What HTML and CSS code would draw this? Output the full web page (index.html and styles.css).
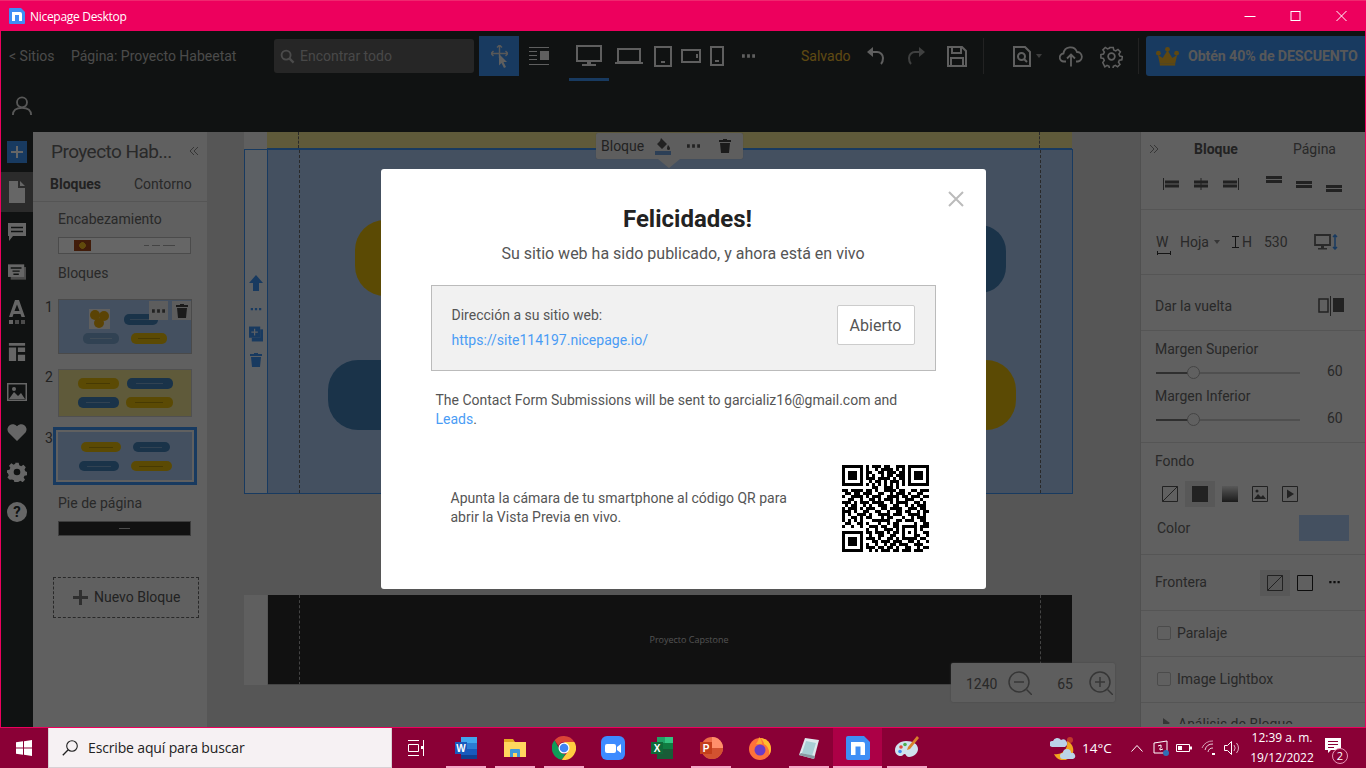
FILE: index.html
```html
<!DOCTYPE html>
<html lang="es">
<head>
<meta charset="utf-8">
<title>Nicepage Desktop</title>
<link rel="stylesheet" href="styles.css">
</head>
<body>
<div class="screen">
  <header class="titlebar">
    <svg class="app-logo" viewBox="0 0 16 16"><path fill="#3f8ef5" d="M1 0h11l4 4v11a1 1 0 0 1-1 1H1a1 1 0 0 1-1-1V1a1 1 0 0 1 1-1z"/><path fill="#fff" d="M3 4h8a2 2 0 0 1 2 2v7h-3V7H6v6H3z"/></svg>
    <span class="app-name">Nicepage Desktop</span>
    <div class="win-controls">
      <svg class="win-btn" viewBox="0 0 45 30"><path stroke="#fff" d="M17 15.5h11"/></svg>
      <svg class="win-btn" viewBox="0 0 45 30"><rect x="17.5" y="10.5" width="9" height="9" fill="none" stroke="#fff"/></svg>
      <svg class="win-btn" viewBox="0 0 45 30"><path stroke="#fff" d="M17 10l10 10M27 10L17 20"/></svg>
    </div>
  </header>

  <div class="app">
    <section class="toolbar">
      <div class="tool-row">
        <span class="crumb">&lt; Sitios</span>
        <span class="page-name">Página: Proyecto Habeetat</span>
        <div class="search">
          <svg class="i16" viewBox="0 0 16 16"><circle cx="6.5" cy="6.5" r="4.8" fill="none" stroke="#bbb" stroke-width="2"/><path d="M10 10l4.5 4.5" stroke="#bbb" stroke-width="2.4"/></svg>
          <span>Encontrar todo</span>
        </div>
        <div class="tool move"><svg class="i24" viewBox="0 0 17 23"><path fill="none" stroke="#ddd" stroke-width="1.4" d="M8.500 0v13M0 8.500h17M2.500 6L0 8.500 2.500 11M14.500 6L17 8.500 14.500 11M6 2.500L8.500 0 11 2.500"/><path fill="#eee" d="M8 9l8 8h-3.500l2.500 5-2 1-2.500-5L8 20.500z"/></svg></div>
        <div class="tool w40"><svg class="i20" viewBox="0 0 20 20"><path stroke="#eee" d="M0 1.5h20M0 5.500h8M0 9.500h8M0 13.500h8M0 18.500h20"/><rect x="11" y="5" width="9" height="9" fill="#eee"/></svg></div>
        <div class="device active"><svg class="d-desk" viewBox="0 0 26 22"><path fill="none" stroke="#eee" stroke-width="2" d="M1 1h24v15H1z"/><path fill="#eee" d="M11 16h4v3h-4zM6 19h14v2H6z"/></svg></div>
        <div class="device w40d"><svg class="d-lap" viewBox="0 0 28 18"><path fill="none" stroke="#eee" stroke-width="2" d="M3 2h22v13H3z"/><path fill="#eee" d="M0 15h28v2H0z"/></svg></div>
        <div class="device w28"><svg class="d-tab" viewBox="0 0 18 21"><path fill="none" stroke="#eee" stroke-width="2" d="M1 1h16v19H1z"/><path fill="#eee" d="M7 15h4v2H7z"/></svg></div>
        <div class="device w28"><svg class="d-land" viewBox="0 0 20 14"><path fill="none" stroke="#eee" stroke-width="2" d="M1 1h18v12H1z"/><path fill="#eee" d="M15 5h2v4h-2z"/></svg></div>
        <div class="device w24"><svg class="d-ph" viewBox="0 0 14 20"><path fill="none" stroke="#eee" stroke-width="2" d="M1 1h12v18H1z"/><path fill="#eee" d="M5 14h4v2H5z"/></svg></div>
        <div class="device w38"><svg class="dots" viewBox="0 0 14 4"><path fill="#eee" d="M0 0h3v4H0zM5.500 0h3v4h-3zM11 0h3v4h-3z"/></svg></div>
        <span class="saved">Salvado</span>
        <div class="tool w38"><svg class="i20" viewBox="0 0 20 20"><path fill="none" stroke="#eee" stroke-width="2" d="M3 6h8a6 6 0 0 1 6 6c0 3-1 5-2 6"/><path fill="#eee" d="M7 1v10L1 6z"/></svg></div>
        <div class="tool w42"><svg class="i20 faint" viewBox="0 0 20 20"><path fill="none" stroke="#eee" stroke-width="2" d="M17 6H9a6 6 0 0 0-6 6c0 3 1 5 2 6"/><path fill="#eee" d="M13 1v10l6-5z"/></svg></div>
        <div class="tool w40"><svg class="i20 big" viewBox="0 0 20 21"><path fill="none" stroke="#eee" stroke-width="2" d="M1 1h14l4 4v15H1z"/><path fill="none" stroke="#eee" stroke-width="2" d="M5 1v6h9V1M4 20v-8h12v8"/></svg></div>
        <i class="vsep first"></i>
        <div class="tool doc"><svg class="d-doc" viewBox="0 0 18 21"><path fill="none" stroke="#eee" stroke-width="2" d="M1 1h11l5 5v14H1z"/><circle cx="8.500" cy="10.500" r="3.500" fill="none" stroke="#eee" stroke-width="2"/><path stroke="#eee" stroke-width="2" d="M11 13l3 3"/></svg><i class="caret"></i></div>
        <div class="tool w50"><svg class="d-cloud" viewBox="0 0 24 20"><path fill="none" stroke="#eee" stroke-width="1.800" d="M7 15H5a4 4 0 0 1-.5-8A7 7 0 0 1 18 5.500 4.800 4.800 0 0 1 19 15h-2"/><path fill="none" stroke="#eee" stroke-width="1.800" d="M12 20V9M8 12l4-4 4 4"/></svg></div>
        <div class="tool w30"><svg class="d-gear" viewBox="0 0 24 24"><circle cx="12" cy="12" r="3.500" fill="none" stroke="#eee" stroke-width="1.800"/><path fill="none" stroke="#eee" stroke-width="1.800" d="M10 1.500h4l.6 3 2.300 1 2.600-1.700 2.800 2.800-1.700 2.600 1 2.300 3 .6-.6 3.800-2.900.5-1 2.300 1.700 2.500-2.800 2.800-2.500-1.700-2.300 1-.6 2.900h-4l-.5-2.900-2.300-1-2.500 1.700L1.900 19l1.700-2.500-1-2.300-2.900-.5v-4l3-.6 1-2.300L2 4.300l2.800-2.800 2.600 1.700 2.300-1z" transform="translate(1.200 1.200) scale(.9)"/></svg></div>
        <i class="vsep second"></i>
        <div class="deal">
          <svg class="crown" viewBox="0 0 24 20"><path fill="#f0b429" d="M4 18l-2-9 5 3 5-8 5 8 5-3-2 9z"/><circle cx="12" cy="3" r="2.500" fill="#f0b429"/><circle cx="2.500" cy="7" r="2.500" fill="#f0b429"/><circle cx="21.500" cy="7" r="2.500" fill="#f0b429"/><rect x="4" y="18" width="16" height="2" fill="#f0b429"/></svg>
          <span>Obtén 40% de DESCUENTO</span>
        </div>
      </div>
      <div class="user-row">
        <svg class="user" viewBox="0 0 22 22"><circle cx="11" cy="7" r="5.500" fill="none" stroke="#ddd" stroke-width="2"/><path fill="none" stroke="#ddd" stroke-width="2" d="M1 21c0-6 4-8 10-8s10 2 10 8"/></svg>
      </div>
    </section>

    <div class="workspace">
      <nav class="rail">
        <div class="rail-item"><span class="plus-box"><svg class="i14" viewBox="0 0 14 14"><path fill="#fff" d="M6 1h2v5h5v2H8v5H6V8H1V6h5z"/></svg></span></div>
        <div class="rail-item on"><svg class="r-doc" viewBox="0 0 16 22"><path fill="#fff" d="M0 0h9v7h7v15H0zM11 0l5 5h-5z"/></svg></div>
        <div class="rail-item"><svg class="r-20" viewBox="0 0 18 18"><path fill="#fff" d="M0 0h18v13H5l-4 5v-5H0z"/><path stroke="#2a2f2d" stroke-width="1.500" d="M3 4.500h12M3 8.500h12"/></svg></div>
        <div class="rail-item"><svg class="r-20" viewBox="0 0 20 17"><path fill="#bbb" d="M3 3h17v14H3z"/><path fill="#fff" d="M0 0h18v14H0z"/><path stroke="#2a2f2d" stroke-width="1.500" d="M3 4h12M5 7.500h8M6 11h6"/></svg></div>
        <div class="rail-item"><svg class="r-a" viewBox="0 0 16 24"><path fill="#fff" d="M6 0h4l6 17h-3.500l-1-3H4.500l-1 3H0zM8 4.500L5.500 11h5z"/><path fill="#fff" d="M0 20h4v4H0z"/><path fill="#bbb" d="M6 20h4v4H6zM12 20h4v4h-4z"/></svg></div>
        <div class="rail-item"><svg class="r-20" viewBox="0 0 18 20"><path fill="#fff" d="M0 0h18v3H0zM0 5h8v15H0zM10 5h8v5h-8zM10 13h8v7h-8z"/></svg></div>
        <div class="rail-item"><svg class="r-20w" viewBox="0 0 20 18"><path fill="#fff" d="M0 0h20v18H0z"/><path fill="#2a2f2d" d="M1.500 1.500h17v15h-17z"/><path fill="#fff" d="M2 16l5-7 4 4 3-3 4 6z"/><circle cx="7" cy="6" r="2" fill="#fff"/></svg></div>
        <div class="rail-item"><svg class="r-20w" viewBox="0 0 20 18"><path fill="#fff" d="M10 18L1.500 9.500A5.200 5.200 0 0 1 10 3.300a5.200 5.200 0 0 1 8.500 6.200z"/></svg></div>
        <div class="rail-item"><svg class="r-20w" viewBox="0 0 24 24"><path fill="#fff" fill-rule="evenodd" d="M10 1h4l.7 3 2.300 1 2.700-1.600 2.800 2.800L21 8.900l1 2.300 2 .8v4l-3 .4-1 2.300 1.600 2.700-2.800 2.800-2.700-1.600-2.300 1-.8 1.400h-4l-.7-3-2.300-1L3.300 21.400.5 18.600 2.100 15.900 1 13.600l-1-.6v-3l3-.7 1-2.300L2.400 4.400 5.200 1.600 7.900 3.200 10 2.200zM12 8a4 4 0 1 0 0 8 4 4 0 0 0 0-8z"/></svg></div>
        <div class="rail-item"><span class="help">?</span></div>
      </nav>

      <aside class="blocks">
        <div class="panel-title"><span>Proyecto Hab...</span><svg class="chev" viewBox="0 0 10 10"><path fill="none" stroke="#888" d="M5 1L1 5l4 4M9 1L5 5l4 4"/></svg></div>
        <div class="tabs"><b>Bloques</b><span>Contorno</span></div>
        <div class="blk-label first">Encabezamiento</div>
        <div class="thumb-head"><i class="sun"></i><i class="dash d1"></i><i class="dash d2"></i><i class="dash d3"></i></div>
        <div class="blk-label">Bloques</div>
        <div class="thumb-row r1">
          <span class="num">1</span>
          <div class="thumb blue">
            <div class="t-line"><span class="honey"><i></i><i></i><i></i></span><i class="pill pb w34"></i></div>
            <div class="t-line tight"><i class="pill pl w36"></i><i class="pill py w36"></i></div>
            <span class="tb-act a1"><svg class="dots small" viewBox="0 0 14 4"><path fill="#555" d="M0 0h3v4H0zM5.500 0h3v4h-3zM11 0h3v4h-3z"/></svg></span>
            <span class="tb-act a2"><svg class="can" viewBox="0 0 12 14"><path fill="#444" d="M4 0h4v1h4v2H0V1h4zM1 4h10l-1 10H2z"/></svg></span>
          </div>
        </div>
        <div class="thumb-row r2">
          <span class="num">2</span>
          <div class="thumb yellow">
            <div class="t-line l2"><i class="pill py w41"></i><i class="pill pb w46"></i></div>
            <div class="t-line l2b"><i class="pill pb w41"></i><i class="pill py w47"></i></div>
          </div>
        </div>
        <div class="thumb-row r3">
          <span class="num n3">3</span>
          <div class="thumb-sel">
            <div class="thumb blue in3">
              <div class="t-line"><i class="pill py w40 s"></i><i class="pill pb w37 s"></i></div>
              <div class="t-line l3b"><i class="pill pb w40 s"></i><i class="pill py w41 s"></i></div>
            </div>
          </div>
        </div>
        <div class="blk-label foot">Pie de página</div>
        <div class="thumb-foot"><i></i></div>
        <div class="new-block"><svg class="i16b" viewBox="0 0 15 15"><path fill="#777" d="M6 0h3v6h6v3H9v6H6V9H0V6h6z"/></svg><span>Nuevo Bloque</span></div>
      </aside>

      <main class="canvas">
        <div class="page-row top-row"><div class="strip"></div><div class="sec-yellow"><i class="guide g1"></i><i class="guide g2"></i></div></div>
        <div class="page-row block-row">
          <div class="strip side">
            <svg class="side-i" viewBox="0 0 14 16"><path fill="#3c91f0" d="M7 0l7 8H10v8H4V8H0z"/></svg>
            <svg class="side-d" viewBox="0 0 14 4"><path fill="#3c91f0" d="M0 0h3v3H0zM5.500 0h3v3h-3zM11 0h3v3h-3z"/></svg>
            <svg class="side-i" viewBox="0 0 15 16"><path fill="#3c91f0" d="M3 3h12v13H3z"/><path fill="#e6f0fa" d="M1 1h11v11H1z"/><path fill="#3c91f0" d="M0 0h12v12H0z"/><path stroke="#e6f0fa" stroke-width="1.300" d="M6 2.500v7M2.500 6h7"/></svg>
            <svg class="side-c" viewBox="0 0 12 14"><path fill="#3c91f0" d="M4 0h4v1h4v2H0V1h4zM1 4h10l-1 10H2z"/></svg>
          </div>
          <div class="sec-block">
            <i class="guide g1"></i><i class="guide g2"></i>
            <i class="big-pill yl"></i><i class="big-pill br"></i><i class="big-pill bl"></i><i class="big-pill yr"></i>
          </div>
        </div>
        <div class="page-row foot-row">
          <div class="strip"></div>
          <div class="sec-foot"><i class="guide g1"></i><i class="guide g2"></i><span>Proyecto Capstone</span></div>
        </div>
        <div class="block-bar">
          <span>Bloque</span>
          <svg class="bb-fill" viewBox="0 0 16 17"><path fill="#555" d="M6 0l6 6-5 5-5-5 3-3z"/><path fill="#555" d="M13 7s2 2 2 3.500a1.500 1.500 0 0 1-3 0C12 9 13 7 13 7z"/><path fill="#6f9fd6" d="M0 13h16v4H0z"/></svg>
          <svg class="dots small" viewBox="0 0 14 4"><path fill="#555" d="M0 0h3v4H0zM5.500 0h3v4h-3zM11 0h3v4h-3z"/></svg>
          <svg class="can" viewBox="0 0 12 14"><path fill="#444" d="M4 0h4v1h4v2H0V1h4zM1 4h10l-1 10H2z"/></svg>
        </div>
        <div class="zoombar">
          <span class="z1">1240</span>
          <svg class="zi" viewBox="0 0 24 24"><circle cx="11" cy="11" r="10" fill="none" stroke="#888" stroke-width="1.500"/><path stroke="#888" stroke-width="1.500" d="M18.500 18.500L24 24M6 11h10"/></svg>
          <span class="z2">65</span>
          <svg class="zi" viewBox="0 0 24 24"><circle cx="11" cy="11" r="10" fill="none" stroke="#888" stroke-width="1.500"/><path stroke="#888" stroke-width="1.500" d="M18.500 18.500L24 24M6 11h10M11 6v10"/></svg>
        </div>
      </main>

      <aside class="props">
        <section class="p-sec h78">
          <div class="p-tabs"><svg class="chev" viewBox="0 0 10 10"><path fill="none" stroke="#888" d="M1 1l4 4-4 4M5 1l4 4-4 4"/></svg><b>Bloque</b><span>Página</span></div>
          <div class="aligns">
            <svg class="al" viewBox="0 0 16 12"><path fill="#555" d="M0 0h1v12H0zM2 2.500h14v3H2zM2 6.500h14v3H2z"/></svg>
            <svg class="al" viewBox="0 0 16 12"><path fill="#555" d="M7.500 0h1v12h-1zM1 2.500h14v3H1zM1 6.500h14v3H1z"/></svg>
            <svg class="al" viewBox="0 0 16 12"><path fill="#555" d="M15 0h1v12h-1zM0 2.500h14v3H0zM0 6.500h14v3H0z"/></svg>
            <svg class="al up" viewBox="0 0 16 8"><path fill="#555" d="M0 0h16v3H0zM0 4h16v3H0z"/></svg>
            <svg class="al mid" viewBox="0 0 16 8"><path fill="#555" d="M0 0h16v3H0zM0 4h16v3H0z"/></svg>
            <svg class="al dn" viewBox="0 0 16 8"><path fill="#555" d="M0 0h16v3H0zM0 4h16v3H0z"/></svg>
          </div>
        </section>
        <section class="p-sec h65 size-row">
          <span class="w-lab">W</span><span class="hoja">Hoja</span><i class="caret dark"></i>
          <svg class="ibeam" viewBox="0 0 7 12"><path fill="none" stroke="#333" d="M0 .5h7M0 11.500h7M3.500 0v12"/></svg>
          <span class="h-lab">H</span><span class="h-val">530</span>
          <svg class="mon" viewBox="0 0 24 16"><path fill="none" stroke="#666" stroke-width="1.800" d="M1 1h15v10H1z"/><path fill="#666" d="M7 11h3v3H7zM4 14h9v1.500H4z"/><path fill="none" stroke="#3c91f0" stroke-width="1.500" d="M21 1v14M19 3l2-2 2 2M19 13l2 2 2-2"/></svg>
        </section>
        <section class="p-sec h56 row-mid">
          <span class="lab flip-l">Dar la vuelta</span>
          <svg class="flip" viewBox="0 0 26 20"><path fill="none" stroke="#555" stroke-width="1.500" d="M1 3h9v13H1z"/><path fill="#555" d="M12 0h1v20h-1zM15 2h11v14H15z"/></svg>
        </section>
        <section class="p-sec h112 margins">
          <div class="lab">Margen Superior</div>
          <div class="slide"><div class="track"><i class="knob"></i></div><span>60</span></div>
          <div class="lab m2">Margen Inferior</div>
          <div class="slide"><div class="track"><i class="knob"></i></div><span>60</span></div>
        </section>
        <section class="p-sec h112 fondo">
          <div class="lab">Fondo</div>
          <div class="fills">
            <span class="fill-b"><svg class="sq" viewBox="0 0 16 16"><path fill="none" stroke="#555" d="M.5.500h15v15H.5zM.5 15.500l15-15"/></svg></span>
            <span class="fill-b sel"><svg class="sq" viewBox="0 0 16 16"><path fill="#555" d="M0 0h16v16H0z"/></svg></span>
            <span class="fill-b"><svg class="sq" viewBox="0 0 16 16"><defs><linearGradient id="gr" x1="0" y1="0" x2="0" y2="1"><stop offset="0" stop-color="#ddd"/><stop offset="1" stop-color="#444"/></linearGradient></defs><path fill="url(#gr)" d="M0 0h16v16H0z"/></svg></span>
            <span class="fill-b"><svg class="sq" viewBox="0 0 16 16"><path fill="none" stroke="#555" d="M.5.500h15v15H.5z"/><path fill="#555" d="M2 13l4-5 3 3 2-2 3 4z"/><circle cx="5" cy="5" r="1.500" fill="#555"/></svg></span>
            <span class="fill-b"><svg class="sq" viewBox="0 0 16 16"><path fill="none" stroke="#555" d="M.5.500h15v15H.5z"/><path fill="#555" d="M5 3.500l7 4.500-7 4.500z"/></svg></span>
          </div>
          <div class="color-row"><span class="lab">Color</span><i class="swatch"></i></div>
        </section>
        <section class="p-sec h56 border-row">
          <span class="lab">Frontera</span>
          <span class="fill-b sel"><svg class="sq" viewBox="0 0 16 16"><path fill="none" stroke="#555" d="M.5.500h15v15H.5zM.5 15.500l15-15"/></svg></span>
          <span class="fill-b"><svg class="sq" viewBox="0 0 16 16"><path fill="none" stroke="#222" d="M.5.500h15v15H.5z"/></svg></span>
          <svg class="dots tiny" viewBox="0 0 14 4"><path fill="#222" d="M0 0h3v3H0zM5.500 0h3v3h-3zM11 0h3v3h-3z"/></svg>
        </section>
        <section class="p-sec h46 check"><i class="box"></i><span class="lab">Paralaje</span></section>
        <section class="p-sec h46 check"><i class="box"></i><span class="lab">Image Lightbox</span></section>
        <div class="analysis"><i class="tri"></i><span class="lab">Análisis de Bloque</span></div>
      </aside>
    </div>

    <div class="overlay">
      <div class="modal">
        <svg class="close" viewBox="0 0 16 16"><path stroke="#bbb" stroke-width="2" d="M1 1l14 14M15 1L1 15"/></svg>
        <h1>Felicidades!</h1>
        <p class="sub">Su sitio web ha sido publicado, y ahora está en vivo</p>
        <div class="addr">
          <div class="addr-text">
            <div>Dirección a su sitio web:</div>
            <a class="link" href="#">https://site114197.nicepage.io/</a>
          </div>
          <button class="open-btn" type="button">Abierto</button>
        </div>
        <p class="notice">The Contact Form Submissions will be sent to garcializ16@gmail.com and <a class="link-in" href="#">Leads</a>.</p>
        <div class="qr-row">
          <p>Apunta la cámara de tu smartphone al código QR para abrir la Vista Previa en vivo.</p>
          <svg class="qr" viewBox="0 0 29 29" shape-rendering="crispEdges"><path stroke="#000" fill="none" d="M0 .5h7M22 .5h7M8 .5h1M10 .5h3M14 .5h2M18 .5h3
M0 1.500h1M6 1.500h1M22 1.500h1M28 1.500h1M8 1.500h1M11 1.500h1M13 1.500h4M18 1.500h1M20 1.500h1
M0 2.500h1M2 2.500h3M6 2.500h1M22 2.500h1M24 2.500h3M28 2.500h1M8 2.500h2M12 2.500h2M15 2.500h3M19 2.500h2
M0 3.500h1M2 3.500h3M6 3.500h1M22 3.500h1M24 3.500h3M28 3.500h1M8 3.500h1M10 3.500h1M13 3.500h1M15 3.500h2M18 3.500h3
M0 4.500h1M2 4.500h3M6 4.500h1M22 4.500h1M24 4.500h3M28 4.500h1M8 4.500h3M12 4.500h4M17 4.500h1M19 4.500h2
M0 5.500h1M6 5.500h1M22 5.500h1M28 5.500h1M9 5.500h1M11 5.500h2M14 5.500h1M16 5.500h3M20 5.500h1
M0 6.500h7M22 6.500h7M8 6.500h1M10 6.500h1M12 6.500h1M14 6.500h1M16 6.500h1M18 6.500h1M20 6.500h1
M10 7.500h2M14 7.500h3M18 7.500h1
M0 8.500h2M3 8.500h3M6 8.500h1M8 8.500h2M11 8.500h1M14 8.500h4M19 8.500h2M23 8.500h2M26 8.500h3
M1 9.500h2M4 9.500h2M7 9.500h3M12 9.500h2M16 9.500h1M18 9.500h3M22 9.500h1M25 9.500h2
M0 10.500h1M3 10.500h4M8 10.500h1M10 10.500h3M15 10.500h4M20 10.500h2M23 10.500h3M27 10.500h2
M2 11.500h2M6 11.500h1M9 11.500h2M12 11.500h1M14 11.500h3M18 11.500h1M21 11.500h3M26 11.500h1
M0 12.500h3M4 12.500h1M6 12.500h3M10 12.500h4M16 12.500h1M18 12.500h4M24 12.500h2M27 12.500h1
M1 13.500h1M3 13.500h2M7 13.500h1M9 13.500h1M12 13.500h3M17 13.500h2M21 13.500h1M23 13.500h1M25 13.500h3
M0 14.500h1M2 14.500h3M6 14.500h1M8 14.500h3M13 14.500h2M16 14.500h4M22 14.500h3M26 14.500h2
M0 15.500h3M4 15.500h1M7 15.500h2M11 15.500h2M15 15.500h1M18 15.500h2M21 15.500h2M25 15.500h1M27 15.500h2
M0 16.500h1M2 16.500h1M5 16.500h3M9 16.500h1M12 16.500h4M17 16.500h3M22 16.500h4M27 16.500h1
M0 17.500h1M3 17.500h2M6 17.500h1M8 17.500h2M13 17.500h1M15 17.500h2M20 17.500h1M23 17.500h1M25 17.500h3
M0 18.500h1M2 18.500h1M4 18.500h1M6 18.500h1M10 18.500h6M18 18.500h2M21 18.500h3M26 18.500h2
M1 19.500h2M5 19.500h2M8 19.500h1M12 19.500h1M15 19.500h1M17 19.500h2M24 19.500h1M27 19.500h2
M0 20.500h1M3 20.500h1M6 20.500h1M9 20.500h3M13 20.500h2M17 20.500h2M20 20.500h5M26 20.500h3
M8 21.500h1M11 21.500h1M14 21.500h3M18 21.500h1M20 21.500h1M24 21.500h1M26 21.500h1
M0 22.500h7M8 22.500h2M11 22.500h3M15 22.500h1M17 22.500h2M20 22.500h1M22 22.500h1M24 22.500h1M27 22.500h2
M0 23.500h1M6 23.500h1M9 23.500h1M12 23.500h2M16 23.500h2M20 23.500h1M24 23.500h2M28 23.500h1
M0 24.500h1M2 24.500h3M6 24.500h1M8 24.500h3M12 24.500h1M15 24.500h2M18 24.500h1M20 24.500h5M26 24.500h2
M0 25.500h1M2 25.500h3M6 25.500h1M10 25.500h2M13 25.500h3M17 25.500h3M22 25.500h2M25 25.500h1M28 25.500h1
M0 26.500h1M2 26.500h3M6 26.500h1M8 26.500h1M11 26.500h1M14 26.500h1M16 26.500h2M19 26.500h3M24 26.500h3
M0 27.500h1M6 27.500h1M8 27.500h3M12 27.500h2M15 27.500h2M18 27.500h1M21 27.500h2M25 27.500h1M27 27.500h2
M0 28.500h7M9 28.500h1M11 28.500h1M13 28.500h3M17 28.500h2M20 28.500h3M24 28.500h3"/></svg>
        </div>
      </div>
    </div>
  </div>

  <footer class="taskbar">
    <div class="start"><svg class="winlogo" viewBox="0 0 16 16"><path fill="#fff" d="M0 2.300l7-1v6.200H0zM8 1.200l8-1.200v7.500H8zM0 8.500h7v6.200l-7-1zM8 8.500h8V16l-8-1.200z"/></svg></div>
    <div class="tb-search">
      <svg class="mag" viewBox="0 0 16 16"><circle cx="10" cy="6" r="5.300" fill="none" stroke="#222" stroke-width="1.100"/><path stroke="#222" stroke-width="1.300" d="M6.200 9.800L.8 15.200"/></svg>
      <span>Escribe aquí para buscar</span>
    </div>
    <div class="tv"><svg class="tv-i" viewBox="0 0 16 16"><path fill="none" stroke="#fff" d="M0 .500h11M0 15.500h11M.5 4.500h10v7H.5zM15.500 0v16"/><path fill="#fff" d="M13 6h3v3h-3z"/></svg></div>
    <div class="task run"><svg class="tk" viewBox="0 0 24 24"><path fill="#41a5ee" d="M7 1h16v6H7z"/><path fill="#2b7cd3" d="M7 7h16v6H7z"/><path fill="#185abd" d="M7 13h16v6H7z"/><path fill="#103f91" d="M7 19h16v4H7z"/><path fill="#185abd" d="M1 6h12v12H1z"/><text x="7" y="15.500" class="t-w">W</text></svg></div>
    <div class="task run"><svg class="tk" viewBox="0 0 24 24"><path fill="#e5a921" d="M1 3h9l2 3H1z"/><path fill="#ffd75e" d="M1 6h22v15H1z"/><path fill="#3f9ad9" d="M7 21v-7a1 1 0 0 1 1-1h8a1 1 0 0 1 1 1v7h-3v-4h-4v4z"/></svg></div>
    <div class="task run"><svg class="tk" viewBox="0 0 24 24"><path fill="#db4437" d="M12 0a12 12 0 0 1 10.400 6H12a6 6 0 0 0-5.600 3.800L2.600 4.300A12 12 0 0 1 12 0z"/><path fill="#0f9d58" d="M2.600 4.300l5.300 9.700a5 5 0 0 0 5.600 3.900l-3.700 5.900A12 12 0 0 1 2.600 4.300z"/><path fill="#ffcd40" d="M22.400 6A12 12 0 0 1 9.800 23.800L15.500 16a5 5 0 0 0 .4-5.500L12 6z"/><circle cx="12" cy="12" r="5.500" fill="#fff"/><circle cx="12" cy="12" r="4.300" fill="#4285f4"/></svg></div>
    <div class="task"><svg class="tk" viewBox="0 0 24 24"><rect width="24" height="24" rx="6" fill="#3d8bff"/><rect x="4" y="8" width="11" height="9" rx="2" fill="#fff"/><path fill="#fff" d="M16 11l4-3v9l-4-3z"/></svg></div>
    <div class="task"><svg class="tk" viewBox="0 0 24 24"><path fill="#21a366" d="M7 1h16v6H7z"/><path fill="#33c481" d="M15 1h8v6h-8z"/><path fill="#107c41" d="M7 7h16v6H7z"/><path fill="#185c37" d="M7 13h16v10H7z"/><path fill="#0e6b39" d="M1 6h12v12H1z"/><text x="7" y="15.500" class="t-w">X</text></svg></div>
    <div class="task run"><svg class="tk" viewBox="0 0 24 24"><circle cx="13" cy="12" r="11" fill="#ed6c47"/><path fill="#ff8f6b" d="M13 1a11 11 0 0 1 11 11H13z"/><path fill="#d35230" d="M2 12h22a11 11 0 0 1-22 0z"/><path fill="#c43e1c" d="M1 6h12v12H1z"/><text x="7" y="15.500" class="t-w">P</text></svg></div>
    <div class="task"><svg class="tk" viewBox="0 0 24 24"><circle cx="12" cy="13" r="11" fill="#ff7139"/><path fill="#ffbd2e" d="M12 2c5 0 11 3 11 11 0 2-1 5-2 6 1-4-1-9-5-11 0-2-2-5-4-6z"/><circle cx="12" cy="14" r="5.500" fill="#6b3bc7"/><path fill="#ffa930" d="M8 8c2-3 3-5 3-7 2 2 3 4 3 7z"/></svg></div>
    <div class="task run"><svg class="tk" viewBox="0 0 24 24"><path fill="#dfe9ee" d="M8 2l14 2-5 19-15-4z"/><path fill="#a9cfd6" d="M9 5l10 2-4 13-10-3z"/><path fill="#889aa3" d="M2 19l15 4 1-3-14-3z"/></svg></div>
    <div class="task active"><svg class="tk" viewBox="0 0 24 24"><path fill="#3f8ef5" d="M2 0h16l6 6v16a2 2 0 0 1-2 2H2a2 2 0 0 1-2-2V2a2 2 0 0 1 2-2z"/><path fill="#fff" d="M5 6h12a2 2 0 0 1 2 2v11h-4.500V10.500h-5V19H5z"/></svg></div>
    <div class="task run"><svg class="tk" viewBox="0 0 24 24"><path fill="#cfe3ee" d="M11 5C5 5 0 9 0 14c0 4 3 6 6 6 2 0 2-2 4-2 1 0 1 3 4 3 5 0 9-4 9-8 0-5-5-8-12-8z"/><circle cx="6" cy="11" r="1.800" fill="#e04b3a"/><circle cx="10" cy="8.500" r="1.800" fill="#4caf50"/><circle cx="5" cy="15.500" r="1.800" fill="#3f8ef5"/><path fill="#d9822b" d="M22 0l2 2-9 11-3 1 1-3z"/></svg></div>
    <div class="tray">
      <svg class="weather" viewBox="0 0 26 24"><circle cx="20" cy="4" r="3" fill="#c0392b"/><path fill="#f1a51f" d="M17 5a10 10 0 1 1-13 13 11 11 0 0 0 13-13z"/><path fill="#bcd3e8" d="M2 11a3 3 0 0 1 1-6 4.500 4.500 0 0 1 8-1 3.500 3.500 0 0 1 4 7zM13 23a3 3 0 0 1 0-6 4 4 0 0 1 8 0 3 3 0 0 1 2 6z"/></svg>
      <span class="temp">14°C</span>
      <svg class="chevup" viewBox="0 0 12 7"><path fill="none" stroke="#fff" d="M.5 6.500l5.500-6 5.500 6"/></svg>
      <svg class="tray-i tr-sync" viewBox="0 0 16 16"><path fill="none" stroke="#fff" d="M1 3l13-2v12H1zM5 6l3-1v3M10 9l-3 1V8"/><circle cx="13" cy="13" r="3" fill="#2f6fb5"/></svg>
      <svg class="tray-i tr-bat" viewBox="0 0 16 16"><path fill="none" stroke="#fff" d="M.5 4.500h13v7H.5z"/><path fill="#fff" d="M2 6h4v4H2zM14 6.500h2v3h-2z"/></svg>
      <svg class="tray-i tr-wifi" viewBox="0 0 16 16"><path fill="none" stroke="#fff" d="M1 8a11 11 0 0 1 11-7" opacity=".6"/><path fill="none" stroke="#fff" d="M4 10a8 8 0 0 1 8-6M7 12a5 5 0 0 1 5-4" opacity=".8"/><path fill="#fff" d="M11 13h3v2h-3z"/></svg>
      <svg class="tray-i tr-vol" viewBox="0 0 16 16"><path fill="none" stroke="#fff" d="M.5 5.500h3l4-4v13l-4-4h-3z"/><path fill="none" stroke="#fff" opacity=".7" d="M10 5a5 5 0 0 1 0 6M12.500 3a8 8 0 0 1 0 10"/></svg>
      <div class="clock"><span>12:39 a. m.</span><span>19/12/2022</span></div>
      <div class="notif"><svg class="note" viewBox="0 0 16 16"><path fill="#fff" d="M0 0h16v12H6l-3 3v-3H0z"/><path stroke="#8a0036" d="M3 3.500h10M3 6.500h10M3 9.500h6"/></svg><span class="badge">2</span></div>
    </div>
  </footer>
</div>
</body>
</html>
```

FILE: styles.css
```css
*{box-sizing:border-box}
html,body{margin:0;padding:0;height:100%;overflow:hidden}
body{font-family:Roboto,"Liberation Sans",sans-serif;font-size:14px;color:#666;background:#000}
i{display:block;font-style:normal}
svg{display:block;flex:none}
.screen{width:1366px;height:768px;display:flex;flex-direction:column;overflow:hidden}

/* title bar */
.titlebar{height:31px;background:#ed005d;border-top:1px solid #f0276f;display:flex;align-items:center;color:#fff;padding-left:9px;flex:none}
.app-logo{width:16px;height:16px}
.app-name{margin-left:5px;font:12px "Open Sans","Noto Sans",sans-serif;letter-spacing:-.3px}
.win-controls{margin-left:auto;margin-right:1px;display:flex}
.win-btn{width:46px;height:30px}

/* app frame */
.app{position:relative;flex:none;height:697px;border:solid #ed005d;border-width:0 1px 1px;display:flex;flex-direction:column;overflow:hidden}
.toolbar{height:101px;background:#2a2f2d;flex:none;padding-top:5px;color:#bbb}
.tool-row{display:flex;height:45px;align-items:flex-start}
.tool-row>*{height:40px;display:flex;align-items:center;flex:none}
.crumb{width:70px;padding-left:8px}
.page-name{width:203px}
.search{width:200px;height:34px!important;margin-top:3px;background:#5f5f5f;border-radius:3px;padding-left:6px;gap:5px;font-size:14px;color:#b5b5b5}
.i16{width:15px;height:15px}
.tool{justify-content:center}
.move{width:40px;margin-left:5px;background:#3c91f0}
.i24{width:17px;height:23px}
.w38{width:38px}.w40{width:40px}.w42{width:42px}.w50{width:50px}.w30{width:30px}
.i20{width:20px;height:20px}
.faint{opacity:.6}
.big{height:21px}
.device{width:40px;justify-content:center;position:relative}
.device.active{margin-left:10px}
.device.active::after{content:"";position:absolute;left:0;right:0;top:42px;height:3px;background:#3c91f0}
.device.w28{width:28px}.device.w24{width:24px}.device.w38{width:38px}
.d-desk{width:26px;height:22px}
.d-lap{width:28px;height:18px}
.d-tab{width:18px;height:21px}
.d-land{width:20px;height:14px}
.d-ph{width:14px;height:20px}
.dots{width:13px;height:4px}
.saved{width:56px;margin-left:34px;color:#ecb92d;font-size:14px}
.vsep{width:1px;height:36px!important;margin-top:2px;background:#555}
.vsep.first{margin-left:6px}
.vsep.second{margin-left:12px}
.doc{width:62px;padding-left:29px;justify-content:flex-start}
.d-doc{width:18px;height:21px}
.caret{width:0;height:0;border:solid transparent;border-width:4px 3.500px 0;border-top-color:#999;margin-left:5px}
.d-cloud{width:24px;height:21px}
.d-gear{width:23px;height:23px}
.deal{margin-left:7px;flex:1!important;background:#3c91f0;border-radius:3px 0 0 3px;padding-left:10px;color:#ddd;font-weight:700;font-size:14.200px;letter-spacing:-.1px;gap:9px}
.crown{width:23px;height:20px}
.user-row{height:51px;padding:15px 0 0 11px}
.user{width:20px;height:20px}

.workspace{flex:1;display:flex;min-height:0}
.rail{width:32px;background:#2a2f2d;flex:none}
.rail-item{height:40px;display:flex;align-items:center;justify-content:center}
.rail-item.on{background:#6c6c6c}
.plus-box{width:20px;height:22px;background:#3c91f0;display:flex;align-items:center;justify-content:center}
.i14{width:14px;height:14px}
.r-doc{width:16px;height:22px}
.r-20{width:18px;height:18px}
.r-20w{width:20px;height:20px}
.r-a{width:16px;height:24px}
.help{width:20px;height:20px;border-radius:50%;background:#fff;color:#2a2f2d;font-weight:700;font-size:15px;line-height:20px;text-align:center}

/* blocks panel */
.blocks{width:174px;background:#f0f0f0;flex:none;padding-left:12px}
.panel-title{height:38px;display:flex;align-items:center;padding-left:6px;font-size:19px;letter-spacing:-.55px;white-space:nowrap}
.panel-title span{width:138px}
.chev{width:10px;height:10px}
.tabs{height:32px;margin-left:-12px;padding-left:17px;border-bottom:1px solid #d4d4d4;display:flex;line-height:28px;color:#666}
.tabs b{width:84px;color:#555}
.blk-label{margin:9px 0 0 13px;height:20px;line-height:20px;color:#666}
.blk-label.first{margin-top:7px}
.blk-label.foot{margin-top:8px}
.thumb-head{margin:8px 0 0 13px;width:133px;height:17px;border:1px solid #bbb;background:#fff;position:relative;display:flex;align-items:center;gap:3px;padding-left:15px}
.sun{width:17px;height:11px;background:radial-gradient(circle,#f3b91f 30%,#a4461b 35%)}
.dash{height:1px;background:#aaa;width:5px}
.d1{margin-left:50px}.d2{width:8px}.d3{width:12px}
.thumb-row{display:flex;margin-top:15px}
.thumb-row.r1{margin-top:16px}
.thumb-row.r3{margin-top:10px}
.num{width:13px;line-height:14px;padding-top:1px;color:#555;font-size:14px}
.num.n3{width:8px;padding-top:4px}
.thumb{width:134px;position:relative;display:flex;flex-direction:column;align-items:center}
.blue{background:#aac8f0}
.yellow{background:#eee191;height:48px;border:1px solid #c8c8c8}
.r1 .thumb{height:55px;padding-top:9px;border:1px solid #b8b8b8}
.t-line{display:flex;gap:12px;align-items:center}
.tight{margin-top:4px;gap:12px}
.honey{width:21px;height:20px;background:#eee;position:relative;display:block;margin:0 2px 0 -4px}
.honey i{position:absolute;width:10px;height:10px;background:#e4a90c;border-radius:50%}
.honey i:nth-child(1){left:1px;top:1px}
.honey i:nth-child(2){left:10px;top:2px}
.honey i:nth-child(3){left:5px;top:9px}
.pill{height:11px;border-radius:5px;display:flex;align-items:center;justify-content:center}
.pill::after{content:"";width:60%;height:1px;background:rgba(255,255,255,.3)}
.py::after{background:rgba(60,50,0,.3)}
.pill.s{height:10px}
.pb{background:#4180b7}.py{background:#e4ba0c}.pl{background:#7ba6cf}
.w34{width:34px}.w36{width:36px}.w37{width:37px}.w41{width:41px}.w46{width:46px}.w47{width:47px}
.pill.w40{width:40px}
.tb-act{position:absolute;top:1px;width:19px;height:19px;background:#e8e8e8;display:flex;align-items:center;justify-content:center}
.a1{left:90px}.a2{left:113px}
.dots.small{width:13px;height:4px}
.can{width:12px;height:14px}
.l2{padding-top:8px;gap:8px}
.l2b{padding-top:8px;gap:7px}
.thumb-sel{width:144px;height:58px;border:3px solid #3c91f0;padding:2px}
.in3{width:134px;height:48px;padding-top:10px;margin-top:0;background:#aac8f0;border:0}
.l3b{padding-top:9px}
.in3 .t-line{gap:12px}
.thumb-foot{margin:8px 0 0 13px;width:133px;height:15px;background:#2b2b2b;border:1px solid #999;display:flex;align-items:center;justify-content:center}
.thumb-foot i{width:11px;height:1px;background:#bbb}
.new-block{margin:41px 0 0 8px;width:146px;height:41px;border:1px dashed #666;display:flex;align-items:center;gap:6px;padding:0 0 1px 19px;color:#555}
.i16b{width:15px;height:15px}

/* canvas */
.canvas{width:933px;flex:none;background:#d7d7d7;padding-left:37px;position:relative;overflow:hidden}
.page-row{display:flex;width:829px}
.strip{width:23px;background:#eee;flex:none}
.top-row{height:17px;width:828px}
.sec-yellow{flex:1;background:#eee191;position:relative;border-bottom:1px solid #3c91f0}
.block-row{height:345px;border:1px solid #3c91f0;border-left-width:1px}
.side{width:23px;background:#e6f0fa;display:flex;flex-direction:column;align-items:center;border-right:1px solid #3c91f0;padding-top:125px}
.side-i{width:14px;height:16px;margin-bottom:10px}
.side-d{width:14px;height:3px;margin:7px 0 15px}
.side-c{width:12px;height:14px;margin-top:1px}
.sec-block{flex:1;background:#aac8f0;position:relative;overflow:hidden}
.guide{position:absolute;top:0;bottom:0;width:0;border-left:1px dashed #666}
.g1{left:31px}.g2{left:772px}
.big-pill{position:absolute}
.yl{left:87px;top:70px;width:200px;height:76px;background:#e4ba0c;border-radius:30px}
.br{left:538px;top:75px;width:200px;height:68px;background:#4180b7;border-radius:26px}
.bl{left:60px;top:210px;width:200px;height:70px;background:#4180b7;border-radius:30px}
.yr{left:548px;top:210px;width:200px;height:70px;background:#e4ba0c;border-radius:30px}
.foot-row{height:90px;margin-top:101px;width:828px}
.sec-foot{flex:1;background:#2b2b2b;position:relative;display:flex;align-items:center;justify-content:center;font:9px "Open Sans","Noto Sans",sans-serif;color:#ccc;margin-left:1px;padding-left:38px;border-bottom:1px solid #aaa}
.sec-foot .guide{border-left-color:#aaa;bottom:-1px}
.sec-foot .g1{left:31px}
.block-bar{position:absolute;left:389px;top:1px;width:147px;height:26px;background:#ececec;border-radius:2px;display:flex;align-items:center;padding-left:5px;color:#555;box-shadow:0 0 1px #999}
.block-bar::after{content:"";position:absolute;left:62px;top:26px;border:solid transparent;border-width:9px 11px 0;border-top-color:#ececec}
.block-bar span{width:54px}
.bb-fill{width:16px;height:17px;margin-right:16px}
.block-bar .can{margin-left:19px}
.zoombar{position:absolute;left:744px;top:531px;width:164px;height:39px;background:#eaeaea;border-radius:2px;display:flex;align-items:center;padding-left:15px;color:#666;box-shadow:0 0 2px #aaa}
.z1{width:42px;padding-top:3px}
.z2{width:43px;text-align:right;padding:3px 14px 0 0;margin-left:12px}
.zi{width:24px;height:24px}
.z2+.zi{margin-left:2px}

/* properties */
.props{flex:1;background:#f0f0f0;border-left:1px solid #c9c9c9;overflow:hidden;min-width:0}
.p-sec{border-bottom:1px solid #d4d4d4;padding-left:14px;color:#666}
.lab{color:#666}
.h78{height:78px}.h65{height:65px}.h56{height:56px}.h112{height:112px}.h46{height:46px}
.p-tabs{height:33px;display:flex;align-items:center;padding-top:0;margin-left:-6px}
.p-tabs .chev{margin-right:35px}
.p-tabs b{width:99px;color:#555}
.aligns{display:flex;height:28px;align-items:flex-start;padding:13px 0 0 8px}
.al{width:16px;height:12px;margin-right:14px}
.aligns .al:nth-child(3){margin-right:27px}
.al.up{height:8px;margin-top:-2px}
.al.mid{height:8px;margin-top:3px}
.al.dn{height:8px;margin-top:7px}
.size-row{display:flex;align-items:center;padding-bottom:0;position:relative}
.w-lab{width:25px;border-bottom:0;position:relative;padding-left:1px}
.w-lab::after{content:"";position:absolute;left:2px;top:17px;width:12px;height:4px;border:solid #333;border-width:0 1px;background:linear-gradient(#333,#333) center/100% 1px no-repeat}
.hoja{width:34px}
.caret.dark{border-top-color:#888;margin-left:0}
.ibeam{width:7px;height:12px;margin-left:12px}
.h-lab{margin-left:3px;width:22px}
.h-val{width:50px}
.mon{width:24px;height:16px}
.row-mid{display:flex;align-items:center;justify-content:space-between;padding:6px 21px 0 14px}
.flip{width:26px;height:20px}
.margins{padding-top:8px}
.margins .lab{height:20px;line-height:20px}
.margins .m2{margin-top:3px}
.slide{display:flex;align-items:center;height:20px;margin-top:4px}
.track{width:144px;height:2px;background:#c5c5c5;position:relative;background-image:linear-gradient(#777,#777);background-size:32px 2px;background-repeat:no-repeat;margin-left:1px}
.knob{position:absolute;left:31px;top:-6px;width:13px;height:13px;border-radius:50%;background:#f0f0f0;border:1px solid #aaa}
.slide span{margin:-5px 0 0 27px;color:#666}
.fondo{padding-top:8px}
.fondo>.lab{height:20px;line-height:20px}
.fills{display:flex;margin:10px 0 0 0}
.fill-b{width:30px;height:26px;display:flex;align-items:center;justify-content:center}
.fill-b.sel{background:#dcdcdc}
.sq{width:16px;height:16px}
.color-row{display:flex;align-items:center;justify-content:space-between;margin-top:8px;padding:0 16px 0 2px}
.swatch{width:50px;height:26px;background:#aac8f0}
.border-row{display:flex;align-items:center}
.border-row .lab{width:105px;margin-top:-1px}
.dots.tiny{width:13px;height:3px;margin-left:8px}
.check{display:flex;align-items:center;gap:6px;padding:0 0 2px 16px}
.box{width:14px;height:14px;border:1px solid #bbb;border-radius:2px;background:#f0f0f0}
.analysis{height:21px;overflow:hidden;padding-left:22px;display:flex;gap:8px}
.tri{width:0;height:0;border:solid transparent;border-width:5px 0 5px 7px;border-left-color:#888;margin-top:15px}
.analysis .lab{margin-top:13px}

/* modal */
.overlay{position:absolute;inset:0;background:rgba(0,0,0,.6);display:flex;align-items:center;justify-content:center;padding-bottom:1px}
.modal{width:605px;height:420px;background:#fff;border-radius:3px;position:relative;padding:0 50px;color:#555}
.close{position:absolute;right:22px;top:22px;width:16px;height:16px}
.modal h1{margin:34px 0 0;height:32px;line-height:32px;font-size:24px;font-weight:700;color:#222;text-align:center;padding-left:9px}
.sub{margin:7px 0 0;font-size:16px;line-height:24px;text-align:center;color:#555}
.addr{margin-top:19px;width:505px;height:86px;background:#f1f1f1;border:1px solid #bbb;display:flex;align-items:center;justify-content:space-between;padding:0 20px}
.addr-text{line-height:25px;color:#555}
.link{display:block;color:#4a9cf5;text-decoration:none}
.open-btn{width:78px;height:40px;background:#fff;border:1px solid #ccc;border-radius:2px;font:16px Roboto,sans-serif;color:#555;padding:2px 0 0;margin-top:-6px}
.notice{margin:20px 0 0 5px;line-height:19px;color:#555;width:480px}
.link-in{color:#4a9cf5;text-decoration:none}
.qr-row{display:flex;margin:27px 0 0 20px;justify-content:space-between;align-items:flex-start;width:478px}
.qr-row p{margin:33px 0 0;line-height:19px;width:350px;color:#555}
.qr{width:87px;height:87px;margin:9px 0 0}

/* taskbar */
.taskbar{flex:none;height:40px;background:#8a0036;display:flex;align-items:center;color:#fff;font-family:"Open Sans","Noto Sans",sans-serif}
.start{width:48px;display:flex;justify-content:center}
.winlogo{width:16px;height:16px}
.tb-search{width:344px;height:40px;background:#f6f1f3;border:solid #d8d0d4;border-width:0 1px 1px;display:flex;align-items:center;color:#222;padding-left:13px;font-size:14px}
.mag{width:16px;height:16px;margin-right:10px}
.tb-search span{letter-spacing:-.15px}
.tv{width:49px;display:flex;justify-content:center;padding-right:2px}
.tv-i{width:16px;height:16px}
.task{width:49px;height:40px;display:flex;align-items:center;justify-content:center;position:relative}
.task.run::after,.task.active::after{content:"";position:absolute;left:5px;right:4px;bottom:0;height:2px;background:#f4a6c6}
.task.active{background:#ac0046}
.task.active::after{left:0;right:0}
.tk{width:24px;height:24px}
.t-w{font:700 10px "Liberation Sans",sans-serif;fill:#fff;text-anchor:middle}
.tray{margin-left:auto;display:flex;align-items:center;height:40px}
.weather{width:26px;height:24px}
.temp{margin-left:6px;width:42px;font-size:13.500px}
.chevup{width:12px;height:7px;margin-left:7px}
.tray-i{width:16px;height:16px}
.tr-sync{margin-left:10px}.tr-bat{margin-left:7px}.tr-wifi{margin-left:9px}.tr-vol{margin-left:7px}
.clock{width:72px;margin-left:6px;display:flex;flex-direction:column;align-items:center;font-size:12px;line-height:20px}
.notif{width:48px;position:relative;height:40px;display:flex;align-items:center;justify-content:center}
.note{width:16px;height:16px;margin-right:18px;margin-bottom:4px}
.badge{position:absolute;left:14px;top:20px;width:16px;height:16px;border-radius:50%;background:#8a0036;border:1px solid #e895b6;font-size:11px;line-height:14px;text-align:center}
```
